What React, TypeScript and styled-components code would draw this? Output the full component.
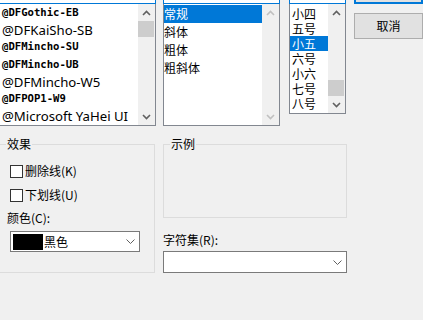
import React from "react";
import styled, { createGlobalStyle } from "styled-components";

const UI_FONT = `"Noto Sans CJK SC", "Noto Sans", sans-serif`;

const Global = createGlobalStyle`
  html, body { margin: 0; padding: 0; background: #f0f0f0; }
  body { width: 423px; height: 320px; overflow: hidden; font-family: ${UI_FONT}; }
  #root { width: 423px; height: 320px; overflow: hidden; }
  *, *::before, *::after { box-sizing: border-box; }
`;

const Dialog = styled.div`
  display: flex;
  flex-direction: column;
  margin: -19px 0 0 -1px;
  width: 424px;
  font: 12px/16px ${UI_FONT};
  color: #000;
`;

const TopRow = styled.div`
  display: flex;
  align-items: flex-start;
`;

const Column = styled.div<{ $w: number; $ml: number }>`
  display: flex;
  flex-direction: column;
  flex: none;
  width: ${(p) => p.$w}px;
  margin-left: ${(p) => p.$ml}px;
`;

const EditBox = styled.div`
  height: 23px;
  border: 1px solid #0078d7;
  background: #fff;
`;

const ListBox = styled.div<{ $h: number }>`
  display: flex;
  height: ${(p) => p.$h}px;
  border: 1px solid #828790;
  border-top: none;
  background: #fff;
  overflow: hidden;
`;

const Items = styled.div<{ $pt?: number }>`
  flex: 1;
  min-width: 0;
  display: flex;
  flex-direction: column;
  overflow: hidden;
  padding-top: ${(p) => p.$pt ?? 0}px;
`;

const FontRow = styled.div<{ $bitmap?: boolean }>`
  height: 17.3px;
  flex: none;
  display: flex;
  align-items: center;
  padding-left: 2px;
  white-space: nowrap;
  ${(p) =>
    p.$bitmap
      ? `font: bold 10.6px/1 "DejaVu Sans Mono", monospace; padding-bottom: 1px;`
      : `font: 13.2px/1 "Noto Sans", sans-serif; padding-top: 1px;`}
`;

const TextRow = styled.div<{ $h: number; $pl: number; $selected?: boolean }>`
  height: ${(p) => p.$h}px;
  line-height: ${(p) => p.$h}px;
  flex: none;
  padding-left: ${(p) => p.$pl}px;
  white-space: nowrap;
  background: ${(p) => (p.$selected ? "#0078d7" : "transparent")};
  color: ${(p) => (p.$selected ? "#fff" : "#000")};
`;

const ScrollBar = styled.div`
  width: 17px;
  flex: none;
  display: flex;
  flex-direction: column;
  background: #f0f0f0;
`;

const ArrowCell = styled.div`
  height: 17px;
  flex: none;
  display: flex;
  align-items: center;
  justify-content: center;
`;

const Track = styled.div<{ $end?: boolean }>`
  flex: 1;
  display: flex;
  flex-direction: column;
  justify-content: ${(p) => (p.$end ? "flex-end" : "flex-start")};
`;

const Thumb = styled.div<{ $h: number }>`
  height: ${(p) => p.$h}px;
  margin: 0 1px 0 0;
  background: #cdcdcd;
`;

const Button = styled.div<{ $h: number; $default?: boolean; $mt?: number }>`
  height: ${(p) => p.$h}px;
  margin-top: ${(p) => p.$mt ?? 0}px;
  display: flex;
  align-items: center;
  justify-content: center;
  background: #e1e1e1;
  border: 1px solid ${(p) => (p.$default ? "#0078d7" : "#adadad")};
  box-shadow: ${(p) => (p.$default ? "inset 0 0 0 1px #0078d7" : "none")};
`;

const BottomRow = styled.div`
  display: flex;
  align-items: flex-start;
  margin-top: 10px;
`;

const Group = styled.fieldset<{ $w: number; $h: number; $ml?: number }>`
  margin: 0 0 0 ${(p) => p.$ml ?? 0}px;
  padding: 0;
  min-width: 0;
  width: ${(p) => p.$w}px;
  height: ${(p) => p.$h}px;
  border: 1px solid #dcdcdc;
  flex: none;
`;

const GroupLegend = styled.legend`
  margin-left: 6px;
  padding: 0 1px;
  font: 12px/16px ${UI_FONT};
`;

const GroupBody = styled.div`
  display: flex;
  flex-direction: column;
  padding: 11px 0 0 7px;
`;

const CheckRow = styled.label<{ $mt?: number }>`
  display: flex;
  align-items: center;
  gap: 2px;
  height: 16px;
  margin: ${(p) => p.$mt ?? 0}px 0 0 3px;
`;

const CheckBox = styled.span`
  width: 13px;
  height: 13px;
  border: 1px solid #333;
  background: #fff;
  flex: none;
`;

const FieldLabel = styled.div<{ $mt: number }>`
  height: 16px;
  margin-top: ${(p) => p.$mt}px;
`;

const Combo = styled.div<{ $w: number; $h: number; $mt: number; $ml?: number }>`
  display: flex;
  align-items: center;
  width: ${(p) => p.$w}px;
  height: ${(p) => p.$h}px;
  margin-top: ${(p) => p.$mt}px;
  margin-left: ${(p) => p.$ml ?? 0}px;
  border: 1px solid #7a7a7a;
  background: #fff;
  padding-left: 2px;
`;

const Swatch = styled.span`
  width: 30px;
  height: 16px;
  background: #000;
  flex: none;
  margin-right: 1px;
`;

const ComboArrow = styled.span<{ $mr: number }>`
  margin-left: auto;
  margin-right: ${(p) => p.$mr}px;
  display: flex;
`;

const RightStack = styled.div`
  display: flex;
  flex-direction: column;
  margin-left: 8px;
`;

const Chevron = ({ dir, color }: { dir: "up" | "down"; color: string }) => (
  <svg width="9" height="6" viewBox="0 0 9 6">
    <path
      d={dir === "up" ? "M1 5 L4.5 1.5 L8 5" : "M1 1 L4.5 4.5 L8 1"}
      fill="none"
      stroke={color}
      strokeWidth="1.6"
    />
  </svg>
);

const ComboChevron = () => (
  <svg width="9" height="5" viewBox="0 0 9 5">
    <path d="M0.5 0.5 L4.5 4.5 L8.5 0.5" fill="none" stroke="#606060" strokeWidth="1" />
  </svg>
);

const Scroll = ({
  thumb,
  end,
  disabled,
}: {
  thumb?: number;
  end?: boolean;
  disabled?: boolean;
}) => {
  const c = disabled ? "#c0c0c0" : "#606060";
  return (
    <ScrollBar>
      <ArrowCell>
        <Chevron dir="up" color={c} />
      </ArrowCell>
      <Track $end={end}>{thumb ? <Thumb $h={thumb} /> : null}</Track>
      <ArrowCell>
        <Chevron dir="down" color={c} />
      </ArrowCell>
    </ScrollBar>
  );
};

const fonts = [
  { t: "@DFGothic-EB", b: true },
  { t: "@DFKaiSho-SB", b: false },
  { t: "@DFMincho-SU", b: true },
  { t: "@DFMincho-UB", b: true },
  { t: "@DFMincho-W5", b: false },
  { t: "@DFPOP1-W9", b: true },
  { t: "@Microsoft YaHei UI", b: false },
];

const styles = ["常规", "斜体", "粗体", "粗斜体"];
const sizes = ["小四", "五号", "小五", "六号", "小六", "七号", "八号"];

export default function App() {
  return (
    <>
      <Global />
      <Dialog>
        <TopRow>
          <Column $w={157} $ml={0}>
            <EditBox />
            <ListBox $h={122}>
              <Items>
                {fonts.map((f) => (
                  <FontRow key={f.t} $bitmap={f.b}>
                    {f.t}
                  </FontRow>
                ))}
              </Items>
              <Scroll thumb={16} />
            </ListBox>
          </Column>
          <Column $w={117} $ml={7}>
            <EditBox />
            <ListBox $h={122}>
              <Items $pt={1}>
                {styles.map((s, i) => (
                  <TextRow key={s} $h={18} $pl={0} $selected={i === 0}>
                    {s}
                  </TextRow>
                ))}
              </Items>
              <Scroll disabled />
            </ListBox>
          </Column>
          <Column $w={57} $ml={9}>
            <EditBox />
            <ListBox $h={110}>
              <Items $pt={2}>
                {sizes.map((s) => (
                  <TextRow key={s} $h={15} $pl={2} $selected={s === "小五"}>
                    {s}
                  </TextRow>
                ))}
              </Items>
              <Scroll thumb={16} end />
            </ListBox>
          </Column>
          <Column $w={69} $ml={8}>
            <Button $h={23} $default>
              确定
            </Button>
            <Button $h={26} $mt={9}>
              取消
            </Button>
          </Column>
        </TopRow>
        <BottomRow>
          <Group $w={156} $h={137}>
            <GroupLegend>效果</GroupLegend>
            <GroupBody>
              <CheckRow>
                <CheckBox />
                删除线(K)
              </CheckRow>
              <CheckRow $mt={8}>
                <CheckBox />
                下划线(U)
              </CheckRow>
              <FieldLabel $mt={7}>颜色(C):</FieldLabel>
              <Combo $w={130} $h={21} $mt={5} $ml={3}>
                <Swatch />
                黑色
                <ComboArrow $mr={4}>
                  <ComboChevron />
                </ComboArrow>
              </Combo>
            </GroupBody>
          </Group>
          <RightStack>
            <Group $w={184} $h={82}>
              <GroupLegend>示例</GroupLegend>
            </Group>
            <FieldLabel $mt={14}>字符集(R):</FieldLabel>
            <Combo $w={184} $h={22} $mt={3}>
              <ComboArrow $mr={4}>
                <ComboChevron />
              </ComboArrow>
            </Combo>
          </RightStack>
        </BottomRow>
      </Dialog>
    </>
  );
}
